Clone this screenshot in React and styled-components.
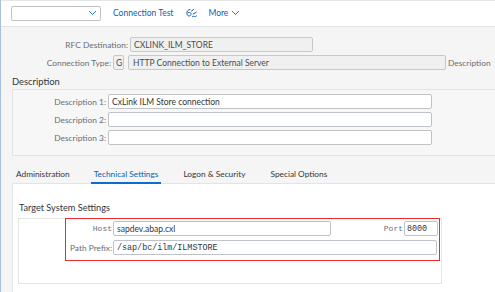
import React from "react";
import styled, { createGlobalStyle } from "styled-components";

const Global = createGlobalStyle`
  html, body { margin: 0; padding: 0; }
  body { background: #f5f5f5; font-family: Lato, "Open Sans", sans-serif; color: #32363a; }
  * { box-sizing: border-box; }
`;

const SANS = 'Lato, "Open Sans", sans-serif';
const MONO = '"Liberation Mono", "DejaVu Sans Mono", monospace';

const Page = styled.div`
  width: 495px;
  height: 292px;
  overflow: hidden;
  border-left: 1px solid #a9c1de;
  background: #f5f5f5;
  display: flex;
  flex-direction: column;
`;

const Toolbar = styled.div`
  height: 27px;
  flex: none;
  background: #fff;
  border-top: 1px solid #e6e6e6;
  border-bottom: 1px solid #e3e3e3;
  display: flex;
  align-items: center;
  padding-left: 10px;
  padding-bottom: 1px;
`;

const Select = styled.div`
  width: 90px;
  height: 15px;
  border: 1px solid #bfc3c7;
  border-radius: 2px;
  background: #fff;
  display: flex;
  align-items: center;
  justify-content: flex-end;
  padding-right: 3px;
  margin-right: 12px;
`;

const ToolButton = styled.span`
  font-size: 8.5px;
  color: #0a5fb0;
  display: flex;
  align-items: center;
  gap: 3px;
  margin-right: ${(p) => p.$mr || 0}px;
`;

const Chevron = ({ color = "#0a6ed1" }) => (
  <svg width="9" height="6" viewBox="0 0 9 6">
    <path d="M1 1 L4.5 4.5 L8 1" fill="none" stroke={color} strokeWidth="0.9" />
  </svg>
);

const TestIcon = () => (
  <svg width="13" height="11" viewBox="0 0 13 11" style={{ marginRight: 10 }}>
    <path
      d="M5 1.5 C3 1.5 1.5 3.5 2 6 C2.5 8.5 5.5 8.5 6 6.5 C6.3 5 5 4 3.5 4.5 M6.5 3 L8.5 1.5 M8 6 C9.5 4.5 11 5.5 11.5 4 M7.5 8.5 C9 7.5 10 9.5 11.5 8"
      fill="none"
      stroke="#0a5fb0"
      strokeWidth="1"
      strokeLinecap="round"
    />
  </svg>
);

const Body = styled.div`
  flex: 1;
  display: flex;
  flex-direction: column;
  padding-top: 10px;
`;

const Row = styled.div`
  display: flex;
  align-items: center;
  height: 15px;
  margin-bottom: ${(p) => p.$mb || 0}px;
`;

const Label = styled.label`
  width: ${(p) => p.$w}px;
  flex: none;
  text-align: right;
  font-size: ${(p) => (p.$mono ? 8 : 8.4)}px;
  color: #6a6d70;
  margin-right: ${(p) => p.$gap ?? 2}px;
  white-space: nowrap;
  font-family: ${(p) => (p.$mono ? MONO : SANS)};
`;

const Input = styled.div`
  width: ${(p) => p.$w}px;
  height: ${(p) => p.$h || 15}px;
  flex: none;
  border: 1px solid ${(p) => (p.$ro ? "#c6c9cc" : "#bfc3c7")};
  border-radius: 2px;
  background: ${(p) => (p.$ro ? "#f0f0f0" : "#fff")};
  font-size: ${(p) => (p.$mono ? 8.4 : 8.5)}px;
  font-family: ${(p) => (p.$mono ? MONO : SANS)};
  color: ${(p) => (p.$ro ? "#4a4d50" : "#32363a")};
  display: flex;
  align-items: center;
  padding-left: ${(p) => p.$pl ?? 3}px;
  margin-right: ${(p) => p.$mr || 0}px;
  white-space: nowrap;
  overflow: hidden;
`;

const SideText = styled.span`
  font-size: 8.4px;
  color: #6a6d70;
`;

const SectionTitle = styled.div`
  font-size: 9.4px;
  color: #32363a;
  padding-left: 11px;
  height: 16px;
  line-height: 17px;
  margin-top: 3px;
`;

const DescBox = styled.div`
  margin-left: 11px;
  margin-right: -5px;
  height: 67px;
  border: 1px solid #e4e4e4;
  border-right: none;
  background: #f7f7f7;
  padding-top: 4px;
  display: flex;
  flex-direction: column;
  gap: 3px;
`;

const TabBar = styled.div`
  height: 28px;
  display: flex;
  align-items: flex-end;
  margin-left: 11px;
  border-bottom: 1px solid #e4e4e4;
  padding-left: 1px;
`;

const Tab = styled.div`
  font-size: 8.3px;
  color: ${(p) => (p.$active ? "#0a5fb0" : "#32363a")};
  padding: 0 3px 3px;
  margin-right: ${(p) => p.$mr}px;
  border-bottom: 2px solid ${(p) => (p.$active ? "#0a6ed1" : "transparent")};
  margin-bottom: -1px;
  white-space: nowrap;
`;

const Panel = styled.div`
  flex: 1;
  margin-left: 11px;
  background: #fff;
  border-left: 1px solid #e4e4e4;
  padding-left: 5px;
  padding-top: 14px;
`;

const GroupTitle = styled.div`
  font-size: 9.2px;
  color: #32363a;
  padding-left: 1px;
  padding-top: 3px;
  height: 20px;
  line-height: 14px;
`;

const GroupBox = styled.div`
  width: 424px;
  height: 66px;
  border: 1px solid #e4e4e4;
`;

const Highlight = styled.div`
  margin-left: 46px;
  margin-top: -1px;
  width: 375px;
  height: 43px;
  border: 1.5px solid #ee2a2f;
  padding-top: 2px;
  padding-left: 1px;
  display: flex;
  flex-direction: column;
  gap: 4px;
`;

export default function App() {
  return (
    <>
      <Global />
      <Page>
        <Toolbar>
          <Select>
            <Chevron />
          </Select>
          <ToolButton $mr={12}>Connection Test</ToolButton>
          <TestIcon />
          <ToolButton>
            More <Chevron />
          </ToolButton>
        </Toolbar>
        <Body>
          <Row $mb={3}>
            <Label $w={127}>RFC Destination:</Label>
            <Input $ro $w={183}>CXLINK_ILM_STORE</Input>
          </Row>
          <Row>
            <Label $w={110}>Connection Type:</Label>
            <Input $ro $w={11} $pl={2} $mr={4}>G</Input>
            <Input $ro $w={318} $pl={4} $mr={2}>HTTP Connection to External Server</Input>
            <SideText>Description</SideText>
          </Row>
          <SectionTitle>Description</SectionTitle>
          <DescBox>
            <Row>
              <Label $w={93}>Description 1:</Label>
              <Input $w={324}>CxLink ILM Store connection</Input>
            </Row>
            <Row>
              <Label $w={93}>Description 2:</Label>
              <Input $w={324} />
            </Row>
            <Row>
              <Label $w={93}>Description 3:</Label>
              <Input $w={324} />
            </Row>
          </DescBox>
          <TabBar>
            <Tab $mr={18}>Administration</Tab>
            <Tab $mr={19} $active>Technical Settings</Tab>
            <Tab $mr={19}>Logon &amp; Security</Tab>
            <Tab $mr={0}>Special Options</Tab>
          </TabBar>
          <Panel>
            <GroupTitle>Target System Settings</GroupTitle>
            <GroupBox>
              <Highlight>
                <Row>
                  <Label $w={45} $mono $gap={1}>Host</Label>
                  <Input $w={218} $mr={0}>sapdev.abap.cxl</Input>
                  <Label $w={72} $mono $gap={1}>Port</Label>
                  <Input $w={34} $mono $pl={2}>8000</Input>
                </Row>
                <Row>
                  <Label $w={45} $gap={1}>Path Prefix:</Label>
                  <Input $w={324} $mono>/sap/bc/ilm/ILMSTORE</Input>
                </Row>
              </Highlight>
            </GroupBox>
          </Panel>
        </Body>
      </Page>
    </>
  );
}
